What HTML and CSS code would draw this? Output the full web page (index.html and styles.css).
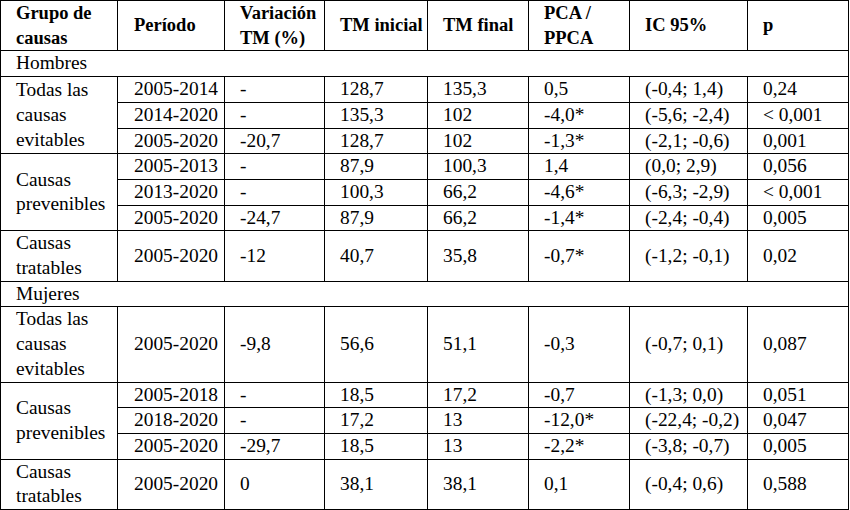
FILE: index.html
```html
<!DOCTYPE html>
<html lang="es">
<head>
<meta charset="utf-8">
<title>Tabla</title>
<link rel="stylesheet" href="styles.css">
</head>
<body>
<table class="data">
  <colgroup>
    <col class="c1"><col class="c2"><col class="c3"><col class="c4"><col class="c5"><col class="c6"><col class="c7"><col class="c8">
  </colgroup>
  <thead>
    <tr>
      <th>Grupo de<br>causas</th>
      <th class="per">Período</th>
      <th>Variación<br>TM (%)</th>
      <th>TM inicial</th>
      <th>TM final</th>
      <th>PCA /<br>PPCA</th>
      <th>IC 95%</th>
      <th>p</th>
    </tr>
  </thead>
  <tbody>
    <tr class="section"><td colspan="8">Hombres</td></tr>
    <tr>
      <td rowspan="3">Todas las<br>causas<br>evitables</td>
      <td class="per">2005-2014</td><td>-</td><td>128,7</td><td>135,3</td><td>0,5</td><td>(-0,4; 1,4)</td><td>0,24</td>
    </tr>
    <tr>
      <td class="per">2014-2020</td><td>-</td><td>135,3</td><td>102</td><td>-4,0*</td><td>(-5,6; -2,4)</td><td>&lt; 0,001</td>
    </tr>
    <tr>
      <td class="per">2005-2020</td><td>-20,7</td><td>128,7</td><td>102</td><td>-1,3*</td><td>(-2,1; -0,6)</td><td>0,001</td>
    </tr>
    <tr>
      <td rowspan="3">Causas<br>prevenibles</td>
      <td class="per">2005-2013</td><td>-</td><td>87,9</td><td>100,3</td><td>1,4</td><td>(0,0; 2,9)</td><td>0,056</td>
    </tr>
    <tr>
      <td class="per">2013-2020</td><td>-</td><td>100,3</td><td>66,2</td><td>-4,6*</td><td>(-6,3; -2,9)</td><td>&lt; 0,001</td>
    </tr>
    <tr>
      <td class="per">2005-2020</td><td>-24,7</td><td>87,9</td><td>66,2</td><td>-1,4*</td><td>(-2,4; -0,4)</td><td>0,005</td>
    </tr>
    <tr>
      <td>Causas<br>tratables</td>
      <td class="per">2005-2020</td><td>-12</td><td>40,7</td><td>35,8</td><td>-0,7*</td><td>(-1,2; -0,1)</td><td>0,02</td>
    </tr>
    <tr class="section"><td colspan="8">Mujeres</td></tr>
    <tr>
      <td>Todas las<br>causas<br>evitables</td>
      <td class="per">2005-2020</td><td>-9,8</td><td>56,6</td><td>51,1</td><td>-0,3</td><td>(-0,7; 0,1)</td><td>0,087</td>
    </tr>
    <tr>
      <td rowspan="3">Causas<br>prevenibles</td>
      <td class="per">2005-2018</td><td>-</td><td>18,5</td><td>17,2</td><td>-0,7</td><td>(-1,3; 0,0)</td><td>0,051</td>
    </tr>
    <tr>
      <td class="per">2018-2020</td><td>-</td><td>17,2</td><td>13</td><td>-12,0*</td><td>(-22,4; -0,2)</td><td>0,047</td>
    </tr>
    <tr>
      <td class="per">2005-2020</td><td>-29,7</td><td>18,5</td><td>13</td><td>-2,2*</td><td>(-3,8; -0,7)</td><td>0,005</td>
    </tr>
    <tr>
      <td>Causas<br>tratables</td>
      <td class="per">2005-2020</td><td>0</td><td>38,1</td><td>38,1</td><td>0,1</td><td>(-0,4; 0,6)</td><td>0,588</td>
    </tr>
  </tbody>
</table>
</body>
</html>
```

FILE: styles.css
```css
html, body {
  margin: 0;
  padding: 0;
  background: #ffffff;
}

body {
  font-family: "Liberation Serif", "Times New Roman", serif;
  color: #000000;
}

.data {
  border-collapse: collapse;
  table-layout: fixed;
  width: 848px;
}

.c1 { width: 117px; }
.c2 { width: 107px; }
.c3 { width: 100px; }
.c4 { width: 103px; }
.c5 { width: 101px; }
.c6 { width: 101px; }
.c7 { width: 118px; }
.c8 { width: 101px; }

.data th,
.data td {
  border: 1px solid #000000;
  padding: 0 2px 0 15px;
  text-align: left;
  vertical-align: middle;
  white-space: nowrap;
  line-height: 24.7px;
}

.data th {
  font-size: 18.5px;
  font-weight: bold;
}

.data td {
  font-size: 19.4px;
}

.data .per {
  padding-left: 16px;
}
```
